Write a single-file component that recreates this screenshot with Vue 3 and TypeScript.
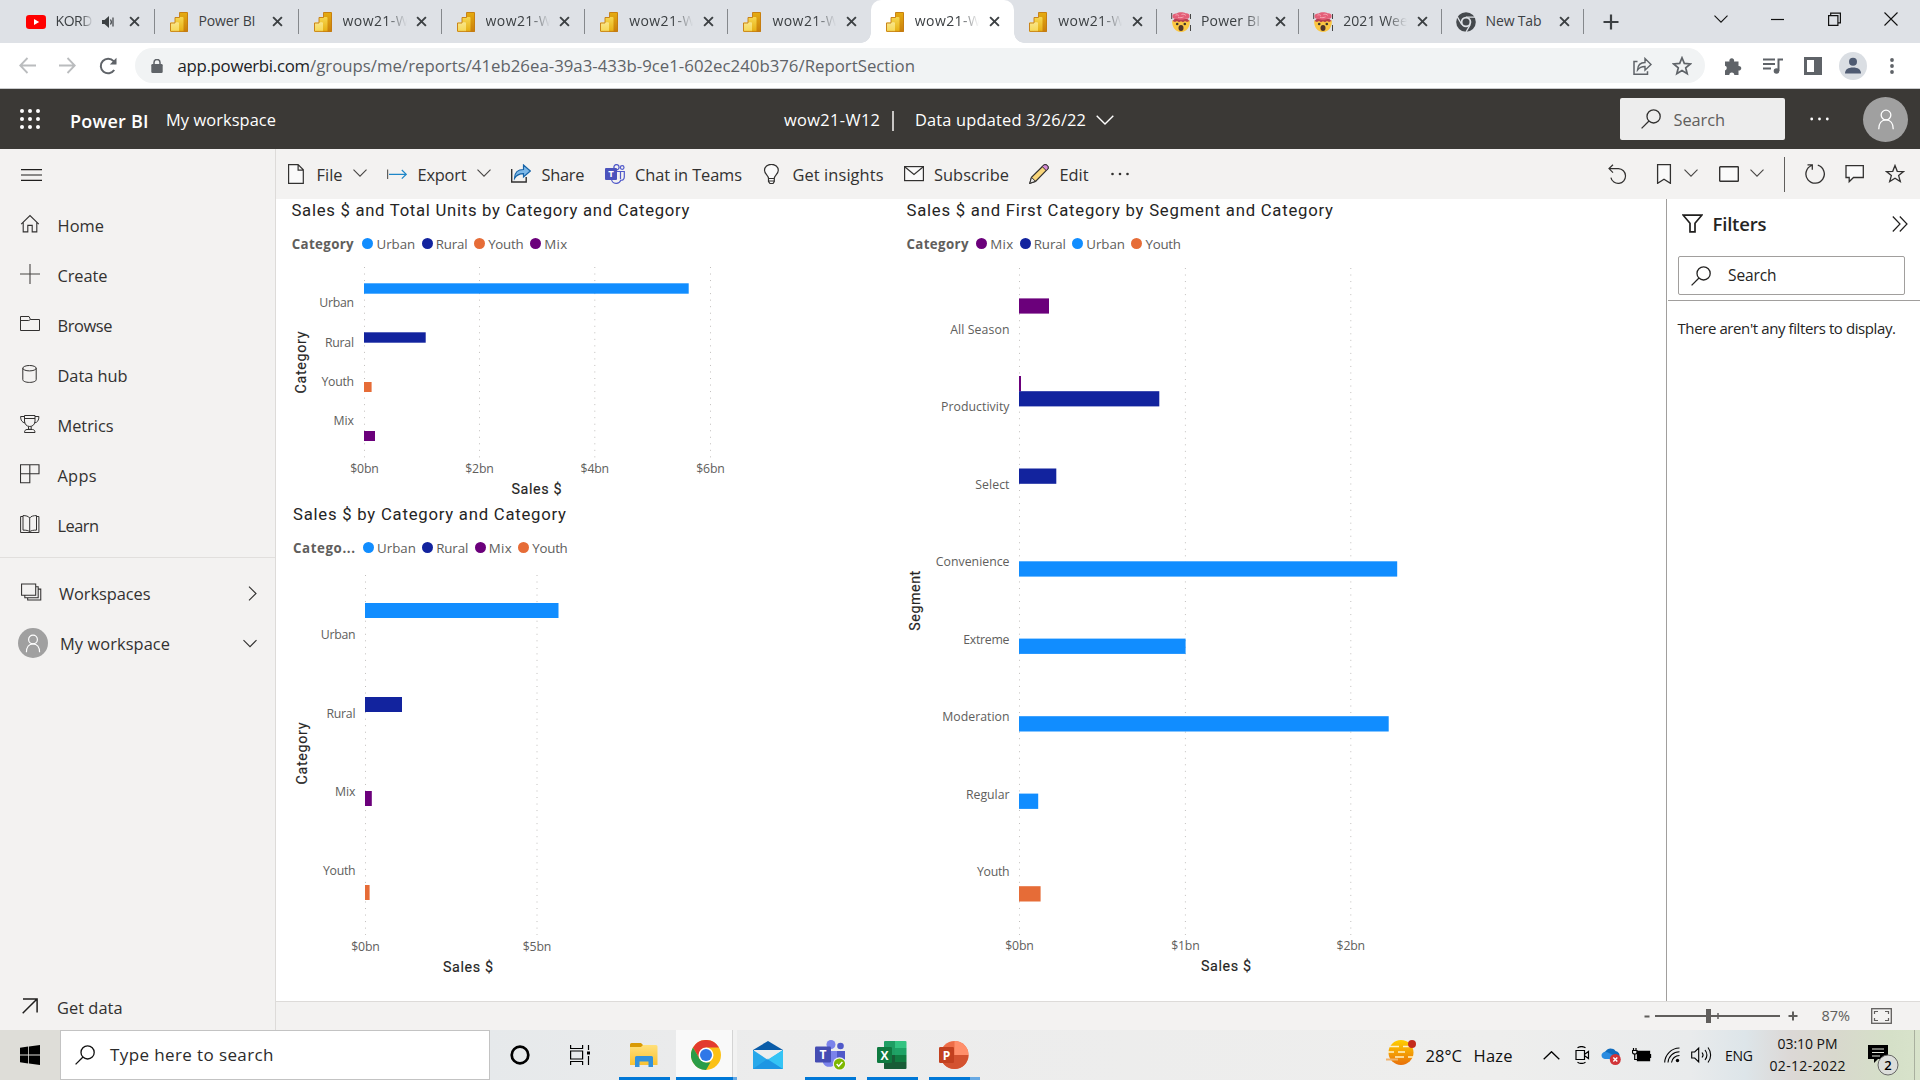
<script setup lang="ts">
import type { Directive } from 'vue'

// Tracks a label out (or in) so that it occupies a fixed width.
const vFit: Directive<HTMLElement, number> = {
  mounted(el, { value }) {
    el.style.display = 'inline-block'
    el.style.whiteSpace = 'nowrap'
    const natural = el.getBoundingClientRect().width
    const gaps = Math.max((el.textContent ?? '').length - 1, 1)
    el.style.letterSpacing = `${(value - natural) / gaps}px`
    el.style.width = `${value}px`
  },
}

interface Tab { icon: string; title: string; fit: number; width: number; active?: boolean; plain?: boolean }
const tabs: Tab[] = [
  { icon: 'youtube', title: 'KORD', fit: 37, width: 143.5 },
  { icon: 'powerbi', title: 'Power BI', fit: 57, width: 144 },
  { icon: 'powerbi', title: 'wow21-W12', fit: 83, width: 143 },
  { icon: 'powerbi', title: 'wow21-W12', fit: 83, width: 143.7 },
  { icon: 'powerbi', title: 'wow21-W12', fit: 83, width: 143.3 },
  { icon: 'powerbi', title: 'wow21-W12', fit: 83, width: 142.3, plain: true },
  { icon: 'powerbi', title: 'wow21-W12', fit: 83, width: 143.5, active: true, plain: true },
  { icon: 'powerbi', title: 'wow21-W12', fit: 83, width: 142.7 },
  { icon: 'mind', title: 'Power BI C', fit: 72, width: 142.3 },
  { icon: 'mind', title: '2021 Week', fit: 72, width: 142.3 },
  { icon: 'chromegray', title: 'New Tab', fit: 56, width: 142.7 },
]

const navItems = [
  { icon: 'home', label: 'Home', fit: 46.5 },
  { icon: 'plus', label: 'Create', fit: 50 },
  { icon: 'folder', label: 'Browse', fit: 55 },
  { icon: 'database', label: 'Data hub', fit: 70 },
  { icon: 'trophy', label: 'Metrics', fit: 56 },
  { icon: 'apps', label: 'Apps', fit: 39 },
  { icon: 'book', label: 'Learn', fit: 41.5 },
]

const commands = [
  { icon: 'file', label: 'File', fit: 26, menu: true },
  { icon: 'export', label: 'Export', fit: 49, menu: true },
  { icon: 'share', label: 'Share', fit: 43 },
  { icon: 'teams', label: 'Chat in Teams', fit: 107 },
  { icon: 'bulb', label: 'Get insights', fit: 91 },
  { icon: 'mail', label: 'Subscribe', fit: 75 },
  { icon: 'pencil', label: 'Edit', fit: 29 },
]

const colors: Record<string, string> = { Urban: '#118dff', Rural: '#12239e', Youth: '#e66c37', Mix: '#6b007b' }
const legendWidths: Record<string, number> = { Urban: 38.7, Rural: 32, Youth: 35.5, Mix: 23 }

interface Label { text: string; y: number; w: number }
interface Bar { y: number; h: number; w: number; key: string }
interface Chart {
  title: string; titleFit: number; legendTitle: string; keys: string[]
  x: number; top: number; width: number; height: number
  origin: number; gridTop: number; gridBottom: number
  labelX: number; labels: Label[]; bars: Bar[]
  ticks: { x: number; text: string }[]; tickY: number
  xTitle: { x: number; y: number }
  yTitle: { text: string; x: number; y: number; w: number }
}

const byCategory: Chart = {
  title: 'Sales $ and Total Units by Category and Category', titleFit: 398, legendTitle: 'Category',
  keys: ['Urban', 'Rural', 'Youth', 'Mix'],
  x: 276, top: 265, width: 614, height: 238,
  origin: 364, gridTop: 267, gridBottom: 458, labelX: 354,
  labels: [
    { text: 'Urban', y: 306.7, w: 34.7 }, { text: 'Rural', y: 346.5, w: 29 },
    { text: 'Youth', y: 385.7, w: 32.5 }, { text: 'Mix', y: 425, w: 20.5 },
  ],
  bars: [
    { y: 283.3, h: 10.4, w: 324.7, key: 'Urban' }, { y: 332.3, h: 10.4, w: 61.7, key: 'Rural' },
    { y: 382, h: 10, w: 7.6, key: 'Youth' }, { y: 431, h: 10, w: 11, key: 'Mix' },
  ],
  ticks: [{ x: 364.5, text: '$0bn' }, { x: 479.5, text: '$2bn' }, { x: 594.8, text: '$4bn' }, { x: 710.5, text: '$6bn' }],
  tickY: 473,
  xTitle: { x: 536.5, y: 494 },
  yTitle: { text: 'Category', x: 305.5, y: 362.5, w: 62 },
}

const salesByCategory: Chart = {
  title: 'Sales $ by Category and Category', titleFit: 273, legendTitle: 'Catego...',
  keys: ['Urban', 'Rural', 'Mix', 'Youth'],
  x: 276, top: 569, width: 614, height: 432,
  origin: 365, gridTop: 575, gridBottom: 935, labelX: 355.5,
  labels: [
    { text: 'Urban', y: 638.7, w: 34.7 }, { text: 'Rural', y: 717.5, w: 29 },
    { text: 'Mix', y: 796, w: 20.5 }, { text: 'Youth', y: 874.7, w: 32.5 },
  ],
  bars: [
    { y: 603, h: 15, w: 193.5, key: 'Urban' }, { y: 697, h: 15, w: 37, key: 'Rural' },
    { y: 791, h: 15, w: 6.8, key: 'Mix' }, { y: 885, h: 15, w: 4.6, key: 'Youth' },
  ],
  ticks: [{ x: 365.5, text: '$0bn' }, { x: 537, text: '$5bn' }],
  tickY: 951,
  xTitle: { x: 468, y: 971.6 },
  yTitle: { text: 'Category', x: 307, y: 753.5, w: 62 },
}

const bySegment: Chart = {
  title: 'Sales $ and First Category by Segment and Category', titleFit: 426.5, legendTitle: 'Category',
  keys: ['Mix', 'Rural', 'Urban', 'Youth'],
  x: 890, top: 265, width: 776, height: 736,
  origin: 1019, gridTop: 268, gridBottom: 935, labelX: 1009.5,
  labels: [
    { text: 'All Season', y: 334, w: 59.3 }, { text: 'Productivity', y: 411.3, w: 68.5 },
    { text: 'Select', y: 488.8, w: 34.2 }, { text: 'Convenience', y: 566, w: 73.7 },
    { text: 'Extreme', y: 644, w: 46.3 }, { text: 'Moderation', y: 721, w: 67.3 },
    { text: 'Regular', y: 799, w: 43.5 }, { text: 'Youth', y: 876.3, w: 32.5 },
  ],
  bars: [
    { y: 298.4, h: 15.2, w: 30, key: 'Mix' }, { y: 376, h: 15.4, w: 2, key: 'Mix' },
    { y: 391.2, h: 15.2, w: 140.3, key: 'Rural' }, { y: 468.5, h: 15.3, w: 37.3, key: 'Rural' },
    { y: 561.3, h: 15.3, w: 378.2, key: 'Urban' }, { y: 638.6, h: 15.3, w: 166.6, key: 'Urban' },
    { y: 716.2, h: 15.3, w: 369.7, key: 'Urban' }, { y: 793.6, h: 15.3, w: 19.2, key: 'Urban' },
    { y: 886.2, h: 15.3, w: 21.6, key: 'Youth' },
  ],
  ticks: [{ x: 1019.5, text: '$0bn' }, { x: 1185.4, text: '$1bn' }, { x: 1350.8, text: '$2bn' }],
  tickY: 950,
  xTitle: { x: 1226, y: 971 },
  yTitle: { text: 'Segment', x: 919.8, y: 600.7, w: 60 },
}

const columns: Chart[][] = [[byCategory, salesByCategory], [bySegment]]
</script>

<template>
  <div class="screen">
    <svg class="sprite" width="0" height="0" aria-hidden="true">
      <defs>
        <linearGradient id="gBack" x1="0" y1="0" x2="0" y2="1"><stop offset="0" stop-color="#e6ad10" /><stop offset="1" stop-color="#c87e0e" /></linearGradient>
        <linearGradient id="gMid" x1="0" y1="0" x2="0" y2="1"><stop offset="0" stop-color="#f6d751" /><stop offset="1" stop-color="#e6ad10" /></linearGradient>
        <linearGradient id="gFront" x1="0" y1="0" x2="0" y2="1"><stop offset="0" stop-color="#f9e589" /><stop offset="1" stop-color="#f6d751" /></linearGradient>
        <linearGradient id="gSun" x1="0" y1="0" x2="0" y2="1"><stop offset="0" stop-color="#ffce00" /><stop offset="1" stop-color="#e8700a" /></linearGradient>
        <linearGradient id="gFolder" x1="0" y1="0" x2="0" y2="1"><stop offset="0" stop-color="#ffe07a" /><stop offset="1" stop-color="#f9c232" /></linearGradient>
      </defs>
      <symbol id="powerbi" viewBox="0 0 18 20">
        <rect x="9.5" y="0" width="8.5" height="20" rx="1" fill="url(#gBack)" />
        <path d="M5 6a1 1 0 0 1 1-1h6.5a1 1 0 0 1 1 1v14H5z" fill="url(#gMid)" />
        <path d="M0 11.3a1 1 0 0 1 1-1h7a1 1 0 0 1 1 1V20H1a1 1 0 0 1-1-1z" fill="url(#gFront)" />
        <path d="M.5 19.4h17V1M.5 19V11h4.5V5.5h4.5V.5h8" fill="none" stroke="#c47b12" stroke-width=".9" />
      </symbol>
      <symbol id="youtube" viewBox="0 0 20 20"><rect y="3" width="20" height="14" rx="3.2" fill="#f00" /><path d="M8 7l5.2 3L8 13z" fill="#fff" /></symbol>
      <symbol id="mind" viewBox="0 0 20 20">
        <path d="M.700 1v6M19.500 2v5M19.500 13v6" stroke="#454545" stroke-width="1" />
        <path d="M1.200 8.500h17.600c.6 6-3 11.500-8.800 11.500S.600 14.500 1.200 8.500z" fill="#fbc742" />
        <path d="M1.500 9l2-2h13l2 2-2.500 1-2-1-2 1.200L10 9.200l-2 1-2-1.200-2 1z" fill="#b5404f" />
        <path d="M1.500 4.500C1 2.500 3.500 1.200 5.500 1.500 7.500-.2 12.500-.2 14.500 1.300c2.500-.4 4.500 1 4 3 .3 2-2 2.800-3.700 2.400-2.300 1.300-6.800 1.300-9.200.2C3.500 7.300 1.200 6.500 1.500 4.500z" fill="#e45f78" />
        <path d="M4.500 3.200c1.500-.8 2.700-.3 3.500.5M10.500 2.600c1.500-.8 3.300-.3 4.300.8M7 5.200c2 .8 4 .5 5.500-.3" fill="none" stroke="#f7a9b6" stroke-width="1" />
        <circle cx="6.200" cy="12" r="1.300" fill="#40352b" /><circle cx="13.800" cy="12" r="1.300" fill="#40352b" />
        <ellipse cx="10" cy="16" rx="2.500" ry="2.900" fill="#51362a" />
      </symbol>
      <symbol id="chromegray" viewBox="0 0 20 20">
        <circle cx="10" cy="10" r="9.800" fill="#45494d" /><circle cx="10" cy="10" r="5.300" fill="#dee1e6" /><circle cx="10" cy="10" r="3.500" fill="#45494d" />
        <path d="M10 5.100h9M5.700 12.500L1.200 4.600M14.300 12.500L10 20" stroke="#dee1e6" stroke-width="1.300" />
      </symbol>
      <symbol id="down" viewBox="0 0 14 8"><path d="M.5.6L7 7.100 13.500.6" fill="none" stroke="currentColor" stroke-width="1.100" /></symbol>
      <symbol id="x" viewBox="0 0 12 12"><path d="M1.200 1.200l9.600 9.600M10.800 1.200L1.200 10.800" stroke="currentColor" stroke-width="2.100" /></symbol>
      <symbol id="magnify" viewBox="0 0 20 20"><circle cx="12.600" cy="7.400" r="6.600" fill="none" stroke="currentColor" stroke-width="1.300" /><path d="M8 12L.6 19.400" stroke="currentColor" stroke-width="1.300" /></symbol>
      <symbol id="person" viewBox="0 0 20 26"><circle cx="10" cy="7.500" r="6" fill="none" stroke="#fff" stroke-width="1.600" /><path d="M1 25c0-7 3.500-11.500 9-11.500s9 4.500 9 11.500" fill="none" stroke="#fff" stroke-width="1.600" /></symbol>
      <symbol id="starline" viewBox="0 0 20 20"><path d="M10 1.500l2.250 5.800 6.250.3-4.850 3.950 1.650 6.050L10 14.200l-5.300 3.400 1.650-6.050L1.500 7.600l6.250-.3z" fill="none" stroke="currentColor" stroke-width="1.300" /></symbol>

      <symbol id="home" viewBox="0 0 20 20"><path d="M1.200 10.200L10 1.600l8.800 8.600M3.200 8.500v9.400h4.600v-6.500h4.400v6.500h4.600V8.500" fill="none" stroke="#323130" stroke-width="1.100" /></symbol>
      <symbol id="plus" viewBox="0 0 20 20"><path d="M10 0v20M0 10h20" stroke="#484644" stroke-width="1.100" /></symbol>
      <symbol id="folder" viewBox="0 0 20 20"><path d="M.5 16.500v-14h8.500l1.500 3h9v11zM.5 6.500h8.200l1.800-1" fill="none" stroke="#323130" /></symbol>
      <symbol id="database" viewBox="0 0 20 20"><ellipse cx="9.500" cy="4.200" rx="6.700" ry="2.700" fill="none" stroke="#323130" /><path d="M2.800 4.200v11.500c0 1.500 3 2.700 6.700 2.700s6.700-1.200 6.700-2.700V4.200" fill="none" stroke="#323130" /></symbol>
      <symbol id="trophy" viewBox="0 0 20 20"><path d="M4.500 1.500h10.500v5.500c0 3-2 5.500-5.200 5.500S4.500 10 4.500 7zM4.500 4.500H15M4.500 2.500H.6c0 3.500 1.200 6 4.600 6.500M15 2.500h3.900c0 3.500-1.200 6-4.600 6.500M8.500 12.500v2.800h2.700v-2.800M4.500 18.500c0-2 1-3 2.500-3h5.500c1.500 0 2.500 1 2.500 3z" fill="none" stroke="#323130" /></symbol>
      <symbol id="apps" viewBox="0 0 20 20"><path d="M.5.800h18.500v9H.5zM.5 9.800v9h9.300v-18" fill="none" stroke="#323130" stroke-width="1.100" /></symbol>
      <symbol id="book" viewBox="0 0 20 20"><path d="M3 2.500H.600v16H18.900v-16H16.500M9.700 4C8.700 2.200 5.500 1.500 3 1.600v14.500c3 0 5.700.3 6.700 1.900 1-1.600 3.800-1.900 6.800-1.900V1.600C14 1.500 10.700 2.200 9.700 4zM9.700 4v14" fill="none" stroke="#323130" /></symbol>
      <symbol id="stack" viewBox="0 0 22 18"><path d="M.6.600h14.800v11.800H.600zM15.400 3.500h2.600v11.500H4v-2.600M18 6h2.700v11.400H7v-2.400" fill="none" stroke="#323130" stroke-width="1.100" /></symbol>

      <symbol id="file" viewBox="0 0 20 20"><path d="M2.600.600h9.500L17.300 5.800v13.600H2.600zM12.100.600v5.500h5.200" fill="#fafafa" stroke="#323130" stroke-width="1.200" /></symbol>
      <symbol id="export" viewBox="0 0 20 20"><path d="M.600 5.500v9.500" stroke="#605e5c" stroke-width="1.200" /><path d="M2 10.300h17.300M14.800 6l4.500 4.300-4.500 4.300" fill="none" stroke="#1e86c8" stroke-width="1.200" /></symbol>
      <symbol id="share" viewBox="0 0 20 20"><path d="M.700 5v13h14.500v-5" fill="none" stroke="#323130" stroke-width="1.400" /><path d="M3.500 14.500c0-6 3.500-9 9-9V1l6.800 6-6.800 6V9.700c-4 0-7 1.300-9 4.800z" fill="#7db8e8" stroke="#1664a8" stroke-width="1.200" /></symbol>
      <symbol id="teams" viewBox="0 0 20 20"><circle cx="11.500" cy="3.200" r="2.600" fill="#f3f2f1" stroke="#5059c9" stroke-width="1.300" /><circle cx="17.200" cy="3.500" r="1.800" fill="#f3f2f1" stroke="#5059c9" stroke-width="1.200" /><path d="M8 7.500h11.300V13c0 2.500-2 3.500-3.500 3.200C15 18 13 19.500 11 19.300c-3 0-4.500-2.500-4.500-4.500zM15.500 7.500V15" fill="#f3f2f1" stroke="#5059c9" stroke-width="1.200" /><rect y="4" width="12" height="12" rx="1" fill="#4b53bc" /><text x="6" y="13.400" text-anchor="middle" font-family="Open Sans" font-size="9.500" font-weight="700" fill="#fff">T</text></symbol>
      <symbol id="bulb" viewBox="0 0 20 20"><path d="M6.500 14.500c0-3-4-4.300-4-8.200a6.900 6 0 0 1 13.800 0c0 3.900-4 5.200-4 8.200zM6.500 14.500v3l1.500 2h3l1.300-2v-3M6.500 17h5.800" fill="#fafafa" stroke="#323130" stroke-width="1.200" /></symbol>
      <symbol id="mail" viewBox="0 0 20 20"><rect x=".6" y="2.600" width="18.800" height="14" fill="#fafafa" stroke="#323130" stroke-width="1.200" /><path d="M1 3l9 7.500L19 3" fill="none" stroke="#323130" stroke-width="1.200" /></symbol>
      <symbol id="pencil" viewBox="0 0 20 20"><path d="M.800 19.300l1.700-6L14.700 1.200c1-.8 2.600-.6 3.600.4s1.200 2.600.3 3.500L6.500 17.400z" fill="#f9d67a" stroke="#323130" stroke-width="1.200" /><path d="M13.300 2.600l1.400-1.400c1-.8 2.600-.6 3.600.4s1.200 2.600.3 3.500l-1.400 1.500z" fill="#d58bd8" stroke="#323130" /><path d="M.800 19.300l1.700-6 4 4z" fill="#e8e6e4" stroke="#323130" /></symbol>
      <symbol id="undo" viewBox="0 0 20 20"><path d="M5 .700L1 4.600l4 4M1 4.600h9.500a7.400 7.400 0 1 1-7.600 9" fill="none" stroke="#323130" stroke-width="1.200" /></symbol>
      <symbol id="bookmark" viewBox="0 0 20 20"><path d="M3.600.700h12.800v18.600L10 15.200l-6.400 4.100z" fill="#fafafa" stroke="#323130" stroke-width="1.300" /></symbol>
      <symbol id="view" viewBox="0 0 20 20"><rect x=".7" y="2.700" width="18.600" height="14.600" rx=".6" fill="#fafafa" stroke="#323130" stroke-width="1.400" /></symbol>
      <symbol id="refresh" viewBox="0 0 20 20"><path d="M12.800 1.200a9.200 9.200 0 1 1-6.200.3M2.500.800l4.800 0v5" fill="none" stroke="#323130" stroke-width="1.300" /></symbol>
      <symbol id="comment" viewBox="0 0 20 20"><path d="M1 1.700h17.300v11.800H8.500l-4.300 4.300v-4.300H1z" fill="#fafafa" stroke="#323130" stroke-width="1.300" /></symbol>
    </svg>

    <header class="tabstrip">
      <div v-for="(tab, i) in tabs" :key="i" class="tab" :class="{ active: tab.active, plain: tab.plain, first: i === 0 }" :style="{ width: tab.width + 'px' }">
        <svg class="favicon" :class="{ wide: !tab.icon.startsWith('power') }"><use :href="'#' + tab.icon" /></svg>
        <span class="tab-title" :class="{ fade: tab.fit > 60 || i === 0 }"><span v-fit="tab.fit">{{ tab.title }}</span></span>
        <svg v-if="i === 0" class="speaker" viewBox="0 0 13 12"><path d="M0 4h2.500L7 0v12L2.500 8H0z" fill="#3c4043" /><path d="M8.500 3.500c1 1.500 1 3.500 0 5M11 1.500v9" fill="none" stroke="#3c4043" stroke-width="1.200" /></svg>
        <svg class="tab-close"><use href="#x" /></svg>
      </div>
      <svg class="new-tab" viewBox="0 0 16 16"><path d="M8 .5v15M.5 8h15" stroke="#3c4043" stroke-width="2.200" /></svg>
      <div class="window-controls">
        <svg width="14" height="8"><use href="#down" /></svg>
        <svg width="13" height="14" viewBox="0 0 13 14"><path d="M0 7.500h13" stroke="#111" stroke-width="1.200" /></svg>
        <svg width="13" height="14" viewBox="0 0 13 14"><path d="M.6 3.600h9.300v9.800H.600zM2.700 3.500V1.100h9.700v9.800H10" fill="none" stroke="#111" stroke-width="1.200" /></svg>
        <svg width="14" height="14" viewBox="0 0 14 14"><path d="M.5.500l13 13M13.500.500l-13 13" stroke="#111" stroke-width="1.100" /></svg>
      </div>
    </header>

    <div class="navbar">
      <svg class="back" viewBox="0 0 17 17"><path d="M17 8.500H1.500M8.500 1L1.200 8.500l7.300 7.500" fill="none" stroke="#babcbe" stroke-width="1.800" /></svg>
      <svg class="forward" viewBox="0 0 17 17"><path d="M0 8.500h15.500M8.500 1l7.300 7.500L8.500 16" fill="none" stroke="#babcbe" stroke-width="1.800" /></svg>
      <svg class="reload" viewBox="0 0 18 18"><path d="M15.200 13A7.300 7.300 0 1 1 14.600 4.200L16.500 6.500" fill="none" stroke="#5f6368" stroke-width="2" /><path d="M17.500.800V7.500h-6.700z" fill="#5f6368" /></svg>
      <div class="omnibox">
        <svg class="lock" viewBox="0 0 12 14"><rect x=".3" y="5" width="11.400" height="9" rx="1.200" fill="#5f6368" /><path d="M3 6V3.500a3 3 0 0 1 6 0V6" fill="none" stroke="#5f6368" stroke-width="1.500" /></svg>
        <span v-fit="132.500" class="host">app.powerbi.com</span><span v-fit="605" class="path">/groups/me/reports/41eb26ea-39a3-433b-9ce1-602ec240b376/ReportSection</span>
        <svg class="omni-share" viewBox="0 0 19 18"><path d="M4.500 4.500H1v12.700h13.500v-3" fill="none" stroke="#5f6368" stroke-width="1.500" /><path d="M4.500 13c.3-5 3-7.500 7.500-7.500v-4l6 6-6 5.700V9.500c-3.500 0-5.700 1-7.500 3.500z" fill="none" stroke="#5f6368" stroke-width="1.400" /></svg>
        <svg class="omni-star" viewBox="0 0 20 20"><path d="M10 1.800l2.300 5.600 6.100.5-4.700 3.900 1.500 5.900L10 14.500l-5.200 3.200 1.500-5.900L1.600 7.900l6.100-.5z" fill="none" stroke="#5f6368" stroke-width="1.700" /></svg>
      </div>
      <svg class="puzzle" viewBox="0 0 18 18"><path d="M1 4.500h4.500a2.400 2.400 0 1 1 4.500 0h4.500V9a2.300 2.300 0 1 1 0 4.500V18h-4.200a2.500 2.500 0 0 0-5 0H1v-4.500a2.500 2.500 0 0 0 0-4.800z" fill="#5f6368" /></svg>
      <svg class="playlist" viewBox="0 0 20 16"><path d="M0 1.500h12M0 6h12M0 10.500h8M15.500 13V1.500H20" fill="none" stroke="#5f6368" stroke-width="2" /><circle cx="13.500" cy="13" r="2.800" fill="#5f6368" /></svg>
      <svg class="panel" viewBox="0 0 18 18"><path d="M0 0h18v18H0zM3 3v12h7V3z" fill="#5f6368" fill-rule="evenodd" /></svg>
      <svg class="profile" viewBox="0 0 28 28"><circle cx="14" cy="14" r="14" fill="#dadee3" /><circle cx="14" cy="9.800" r="4" fill="#4f5b72" /><path d="M6 21.500c0-4 3-6 8-6s8 2 8 6z" fill="#4f5b72" /></svg>
      <svg class="kebab" viewBox="0 0 4 18"><circle cx="2" cy="3" r="1.900" fill="#5f6368" /><circle cx="2" cy="9" r="1.900" fill="#5f6368" /><circle cx="2" cy="15" r="1.900" fill="#5f6368" /></svg>
    </div>

    <div class="brandbar">
      <svg class="waffle" viewBox="0 0 20 20" fill="#fff"><template v-for="r in 3" :key="r"><circle v-for="c in 3" :key="c" :cx="c * 8 - 6" :cy="r * 8 - 6" r="2" /></template></svg>
      <b v-fit="78.500" class="brand">Power BI</b>
      <span v-fit="110" class="crumb">My workspace</span>
      <span v-fit="96" class="report-name">wow21-W12</span>
      <i class="brand-divider"></i>
      <span v-fit="171">Data updated 3/26/22</span>
      <svg class="brand-chevron" viewBox="0 0 18 10"><path d="M.7.700L9 9 17.300.7" fill="none" stroke="#fff" stroke-width="1.400" /></svg>
      <div class="brand-search"><svg width="20" height="20"><use href="#magnify" /></svg><span v-fit="51.500">Search</span></div>
      <svg class="brand-dots" viewBox="0 0 19 4" fill="#fff"><circle cx="1.700" cy="2" r="1.400" /><circle cx="9.500" cy="2" r="1.400" /><circle cx="17.300" cy="2" r="1.400" /></svg>
      <div class="brand-avatar"><svg width="18" height="21"><use href="#person" /></svg></div>
    </div>

    <div class="workarea">
      <nav class="sidebar">
        <svg class="hamburger" viewBox="0 0 21 12"><path d="M0 .700h21M0 6h21M0 11.300h21" stroke="#201f1e" stroke-width="1.200" /></svg>
        <div v-for="item in navItems" :key="item.label" class="nav-item">
          <svg width="20" height="20"><use :href="'#' + item.icon" /></svg>
          <span v-fit="item.fit">{{ item.label }}</span>
        </div>
        <hr />
        <div class="nav-item workspaces">
          <svg width="21" height="18"><use href="#stack" /></svg>
          <span v-fit="91.500">Workspaces</span>
          <svg class="arrow" width="9" height="15" viewBox="0 0 9 15"><path d="M1 .700l7 6.800-7 6.800" fill="none" stroke="#323130" stroke-width="1.100" /></svg>
        </div>
        <div class="nav-item mine">
          <div class="small-avatar"><svg width="16" height="19"><use href="#person" /></svg></div>
          <span v-fit="110">My workspace</span>
          <svg class="arrow" width="14" height="9"><use href="#down" /></svg>
        </div>
        <div class="nav-item get-data">
          <svg width="16" height="16" viewBox="0 0 16 16"><path d="M.7 15.300L15 1M1 .900h14.100v13.500" fill="none" stroke="#201f1e" stroke-width="1.500" /></svg>
          <span v-fit="65.500">Get data</span>
        </div>
      </nav>

      <main class="content">
        <div class="commandbar">
          <div v-for="cmd in commands" :key="cmd.label" class="command">
            <svg width="20" height="20"><use :href="'#' + cmd.icon" /></svg>
            <span v-fit="cmd.fit">{{ cmd.label }}</span>
            <svg v-if="cmd.menu" class="menu-arrow" width="14" height="8"><use href="#down" /></svg>
          </div>
          <svg class="more" width="18" height="4" viewBox="0 0 18 4" fill="#323130"><circle cx="1.500" cy="2" r="1.300" /><circle cx="9" cy="2" r="1.300" /><circle cx="16.500" cy="2" r="1.300" /></svg>
          <div class="tools">
            <svg class="tool"><use href="#undo" /></svg>
            <svg class="tool t-bookmark"><use href="#bookmark" /></svg>
            <svg class="menu-arrow" width="14" height="8"><use href="#down" /></svg>
            <svg class="tool t-view"><use href="#view" /></svg>
            <svg class="menu-arrow" width="14" height="8"><use href="#down" /></svg>
            <i class="tool-divider"></i>
            <svg class="tool"><use href="#refresh" /></svg>
            <svg class="tool t-comment"><use href="#comment" /></svg>
            <svg class="tool t-star"><use href="#starline" /></svg>
          </div>
        </div>

        <div class="report">
          <div v-for="(column, c) in columns" :key="c" class="column">
            <section v-for="chart in column" :key="chart.title" class="chart">
              <h2><span v-fit="chart.titleFit">{{ chart.title }}</span></h2>
              <div class="legend">
                <b v-fit="62">{{ chart.legendTitle }}</b>
                <span v-for="key in chart.keys" :key="key" class="legend-item">
                  <i :style="{ background: colors[key] }"></i><span v-fit="legendWidths[key]">{{ key }}</span>
                </span>
              </div>
              <svg class="plot" :width="chart.width" :height="chart.height" :viewBox="`${chart.x} ${chart.top} ${chart.width} ${chart.height}`">
                <line v-for="tick in chart.ticks" :key="tick.text" :x1="tick.x" :x2="tick.x" :y1="chart.gridTop" :y2="chart.gridBottom" class="grid" />
                <rect v-for="(bar, b) in chart.bars" :key="b" :x="chart.origin" :y="bar.y" :width="bar.w" :height="bar.h" :fill="colors[bar.key]" />
                <text v-for="label in chart.labels" :key="label.text" class="axis" :x="chart.labelX - label.w" :y="label.y" :textLength="label.w">{{ label.text }}</text>
                <text v-for="tick in chart.ticks" :key="tick.x" class="axis" :x="tick.x - 14.2" :y="chart.tickY" textLength="28.500">{{ tick.text }}</text>
                <text class="axis-title" :x="chart.xTitle.x - 25" :y="chart.xTitle.y" textLength="50">Sales $</text>
                <text class="axis-title" :x="-chart.yTitle.w / 2" y="0" :textLength="chart.yTitle.w" :transform="`translate(${chart.yTitle.x} ${chart.yTitle.y}) rotate(-90)`">{{ chart.yTitle.text }}</text>
              </svg>
            </section>
          </div>

          <aside class="filters">
            <div class="filters-head">
              <svg width="21" height="19" viewBox="0 0 21 19"><path d="M1.200 1.200h18.600L13 9.200v8.600H8V9.200z" fill="none" stroke="#201f1e" stroke-width="1.700" /></svg>
              <b v-fit="54">Filters</b>
              <svg class="collapse" width="16" height="16" viewBox="0 0 16 16"><path d="M.8.500L8 8 .800 15.500M7.800.500L15 8l-7.200 7.500" fill="none" stroke="#201f1e" stroke-width="1.200" /></svg>
            </div>
            <div class="filters-search"><svg width="20" height="20"><use href="#magnify" /></svg><span v-fit="48.500">Search</span></div>
            <p><span v-fit="218.500">There aren't any filters to display.</span></p>
          </aside>
        </div>

        <footer class="statusbar">
          <svg class="zoomer" width="154" height="16" viewBox="0 0 154 16"><path d="M.5 8.500h5M11 8h125M144.500 8h9M149 3.500v9" stroke="#605e5c" stroke-width="2" /><rect x="62" y="1" width="5" height="14" fill="#605e5c" /><path d="M74 5v6" stroke="#605e5c" stroke-width="1.500" /></svg>
          <span v-fit="28.500">87%</span>
          <svg width="21" height="16" viewBox="0 0 21 16"><rect x=".7" y=".7" width="19.600" height="14.600" fill="none" stroke="#605e5c" stroke-width="1.300" /><path d="M3.500 6V3.500H7M14 3.500h3.500V6M3.500 10v2.500H7M14 12.500h3.500V10" fill="none" stroke="#605e5c" stroke-width="1.200" /></svg>
        </footer>
      </main>
    </div>

    <div class="taskbar">
      <div class="start"><svg width="20" height="20" viewBox="0 0 20 20"><path d="M0 2.800L8.200 1.600v7.900H0zM9 1.500L20 0v9.500H9zM0 10.400h8.200v8L0 17.200zM9 10.400h11V20L9 18.500z" /></svg></div>
      <div class="task-search"><svg width="20" height="20"><use href="#magnify" /></svg><span v-fit="163.500">Type here to search</span></div>
      <div class="slot cortana"><svg width="20" height="20" viewBox="0 0 20 20"><circle cx="10" cy="10" r="8.300" fill="none" stroke="#000" stroke-width="2.700" /></svg></div>
      <div class="slot view"><svg width="21" height="20" viewBox="0 0 21 20"><path d="M.6 0v3.500h12V0M.6 20v-3.500h12V20M.6 6h12v8h-12zM18.500 0v5M18.500 11v9" fill="none" stroke="#000" stroke-width="1.200" /><rect x="17" y="6.500" width="3" height="3" /></svg></div>
      <div class="slot app explorer"><svg width="28" height="24" viewBox="0 0 28 24"><path d="M0 1.500A1.500 1.500 0 0 1 1.500 0H11l2.500 2.500-2 2.500H0z" fill="#d99a05" /><path d="M0 4h11l2-2h13a1.500 1.500 0 0 1 1.500 1.500V22H0z" fill="url(#gFolder)" /><path d="M5 24V14.500A1.500 1.500 0 0 1 6.500 13h15a1.500 1.500 0 0 1 1.500 1.500V24h-4.500v-5.500h-9V24z" fill="#3191dc" /></svg></div>
      <div class="slot app chrome"><svg width="30" height="30" viewBox="0 0 30 30"><circle cx="15" cy="15" r="15" fill="#fbc116" /><path d="M15 15h0L8.500 18.800 2 7.500A15 15 0 0 1 28 7.500H15z" fill="#e33b2e" /><path d="M2 7.500L8.500 18.800 15 22.500h4.400L15 30A15 15 0 0 1 2 7.500z" fill="#2b9c48" /><circle cx="15" cy="15" r="7.500" fill="#fff" /><circle cx="15" cy="15" r="6" fill="#2f78e8" /></svg></div>
      <div class="slot mail-slot"><svg width="30" height="28" viewBox="0 0 30 28"><path d="M0 9L15 0l15 9v5H0z" fill="#0a5ca8" /><path d="M1 9h28v9H1z" fill="#ededed" /><path d="M0 9l15 10 15-10v19H0z" fill="#28a8ea" /><path d="M0 28h30L15 17.500z" fill="#1587dc" opacity=".55" /><path d="M30 9v19L15 18.500z" fill="#35c4f5" /></svg></div>
      <div class="slot app teams-slot"><svg width="32" height="31" viewBox="0 0 32 31"><circle cx="16" cy="4.500" r="4.500" fill="#7b83eb" /><circle cx="25.500" cy="6" r="3.300" fill="#5059c9" /><path d="M20 11h10v8c0 4-3 6-6 6h-4z" fill="#5059c9" /><path d="M8 11h14v9a7.500 7.500 0 0 1-14 3z" fill="#7b83eb" /><rect y="6.500" width="16" height="16" rx="1.300" fill="#454db3" /><text x="8" y="19" text-anchor="middle" font-family="Open Sans" font-size="12" font-weight="700" fill="#fff">T</text><circle cx="24.500" cy="24" r="6.700" fill="#f2f2f2" /><circle cx="24.500" cy="24" r="5.600" fill="#7db700" /><path d="M21.700 24l2 2.200 3.700-4.200" fill="none" stroke="#fff" stroke-width="1.500" /></svg></div>
      <div class="slot app excel"><svg width="30" height="28" viewBox="0 0 30 28"><path d="M7 1a1 1 0 0 1 1-1h10v28H8a1 1 0 0 1-1-1z" fill="#1f9e63" /><path d="M18 0h10.500a1 1 0 0 1 1 1v6H18z" fill="#33c481" /><path d="M18 7h11.500v7H18z" fill="#1fa366" /><path d="M18 14h11.500v7H18z" fill="#107c41" /><path d="M7 21h22.500v6a1 1 0 0 1-1 1H8a1 1 0 0 1-1-1zM7 14h11v7H7z" fill="#185c37" /><rect y="6" width="15" height="16" rx="1.300" fill="#0f7a40" /><text x="7.500" y="18.600" text-anchor="middle" font-family="Open Sans" font-size="12" font-weight="700" fill="#fff">X</text></svg></div>
      <div class="slot app ppt"><svg width="30" height="28" viewBox="0 0 30 28"><circle cx="15.500" cy="14" r="14" fill="#ed6c47" /><path d="M15.500 0a14 14 0 0 1 14 14h-14z" fill="#ff8f6b" /><path d="M1.500 14h28a14 14 0 0 1-28 0z" fill="#d35230" /><rect y="6" width="15" height="16" rx="1.300" fill="#c2401f" /><text x="7.500" y="18.600" text-anchor="middle" font-family="Open Sans" font-size="12" font-weight="700" fill="#fff">P</text></svg></div>
      <div class="tray">
        <svg class="sun" width="30" height="26" viewBox="0 0 30 26"><circle cx="15" cy="12.500" r="12.500" fill="url(#gSun)" /><path d="M4 6.500h9M17 6.500h7M2 12h6M12 12h7M9 17h9M22 17h6" stroke="#fff3c8" stroke-width="1.300" /><path d="M0 19.500h12" stroke="#f0b26a" stroke-width="2" /><circle cx="26" cy="4" r="4" fill="#c42b1c" /></svg>
        <span v-fit="36.500" class="temp">28°C</span><span v-fit="39" class="haze">Haze</span>
        <svg class="chev-up" width="17" height="9" viewBox="0 0 17 9"><path d="M.7 8.300L8.500.700l7.800 7.600" fill="none" stroke="#000" stroke-width="1.300" /></svg>
        <svg class="cam" width="15" height="18" viewBox="0 0 15 18"><path d="M1 4.500h8.500v9H1zM10 8l3.500-2.500v7L10 10M2.500 1.800c2.500-1.600 5.500-1.600 8 0M2.500 16.200c2.500 1.600 5.500 1.600 8 0" fill="none" stroke="#000" stroke-width="1.200" /></svg>
        <svg class="cloud" width="20" height="17" viewBox="0 0 20 17"><path d="M4 10.500a4 4 0 0 1 .5-7.300A6 6 0 0 1 14.500 3 4.500 4.500 0 0 1 18 9.500L14 11z" fill="#0f6cbd" /><path d="M8 5l9.500 4.500L14 11H4a4 4 0 0 1-3.500-4C1 4 5 3 8 5z" fill="#2a8be0" /><circle cx="14.300" cy="11.500" r="5.500" fill="#d13438" /><path d="M12.300 9.500l4 4M16.300 9.500l-4 4" stroke="#fff" stroke-width="1.400" /></svg>
        <svg class="battery" width="20" height="14" viewBox="0 0 20 14"><path d="M5.500 3.500h12v9h-12zM18.500 6v4" fill="none" stroke="#000" stroke-width="1.300" /><rect x="6" y="4" width="11" height="8" /><path d="M1.500 0v2.500M4 0v2.500M.5 2.500H5v2c0 2-4.500 2-4.500 0zM2.700 6v5.500H5" fill="none" stroke="#000" stroke-width="1.200" /></svg>
        <svg class="wifi" width="16" height="16" viewBox="0 0 16 16"><path d="M.7 15.500A15 15 0 0 1 15.500 1M4 15.500A11.500 11.500 0 0 1 15.500 4.700M7.500 15.500a8 8 0 0 1 8-7" fill="none" stroke="#000" stroke-width="1.100" /><circle cx="13.500" cy="13.500" r="1.700" /></svg>
        <svg class="volume" width="21" height="18" viewBox="0 0 21 18"><path d="M.7 6h3l4-4v14l-4-4h-3zM11 6.500c1.300 1.500 1.300 3.500 0 5M14 4c2.300 3 2.300 7 0 10M17 1.500c3.500 4.500 3.500 10.500 0 15" fill="none" stroke="#000" stroke-width="1.100" /></svg>
        <span v-fit="28" class="lang">ENG</span>
        <div class="clock"><span v-fit="60">03:10 PM</span><span v-fit="76">02-12-2022</span></div>
        <svg class="notice" width="31" height="31" viewBox="0 0 31 31"><path d="M0 0h20v14H10l-4 4v-4H0z" /><path d="M4 4h12M4 7.500h12M4 11h8" stroke="#e4e8dd" stroke-width="1.200" /><circle cx="20" cy="20" r="10" fill="#dcdedb" stroke="#666" /><text x="20" y="24.800" text-anchor="middle" font-family="Open Sans" font-size="13" font-weight="600">2</text></svg>
        <i class="peek"></i>
      </div>
    </div>
  </div>
</template>

<style>
body { margin: 0; overflow: hidden; }
</style>

<style scoped>
.screen { width: 1920px; height: 1080px; display: flex; flex-direction: column; font-family: "Open Sans", "Noto Sans", sans-serif; font-size: 16.4px; color: #323130; background: #fff; overflow: hidden; position: relative; }
.screen * { box-sizing: border-box; }
svg { flex: none; display: block; }
svg.sprite { position: absolute; }
span, b { flex: none; }

.tabstrip { height: 43px; flex: none; background: #dee1e6; display: flex; align-items: center; padding-left: 11px; color: #3c4043; font-size: 14px; }
.tab { height: 43px; flex: none; display: flex; align-items: center; padding-left: 15px; position: relative; }
.tab:not(.plain)::after { content: ""; position: absolute; right: 0; top: 9px; width: 1px; height: 25px; background: #85888c; }
.favicon { width: 18px; height: 20px; }
.favicon.wide { width: 20px; margin: 0 -1px; }
.first .favicon.wide { margin: 0; }
.tab-title { width: 64px; margin-left: 11px; overflow: hidden; line-height: 24px; white-space: nowrap; padding-bottom: 1px; }
.tab-title.fade { mask-image: linear-gradient(90deg, #000 68%, transparent 100%); }
.first .tab-title { width: 37px; margin-left: 9.500px; }
.speaker { width: 13px; height: 12px; margin-left: 9px; }
.tab-close { width: 11px; height: 11px; margin-left: 9.800px; }
.first .tab-close { margin-left: 14.800px; }
.active { background: #fff; border-radius: 10px 10px 0 0; }
.active::before { content: ""; position: absolute; left: -10px; right: -10px; bottom: 0; height: 10px; background: radial-gradient(circle at 0 0, transparent 9.500px, #fff 10px) left / 10px 10px no-repeat, radial-gradient(circle at 100% 0, transparent 9.500px, #fff 10px) right / 10px 10px no-repeat; }
.new-tab { width: 16px; height: 16px; margin-left: 19px; }
.window-controls { margin-left: auto; display: flex; align-items: center; gap: 43.500px; padding: 0 22px 6px 0; color: #111; }

.navbar { height: 46px; flex: none; border-bottom: 1px solid #c9cacc; display: flex; align-items: center; }
.back, .forward { width: 17px; height: 17px; margin: 0 0 1px 19px; }
.forward { margin-left: 23px; }
.reload { width: 18px; height: 18px; margin-left: 22.500px; }
.omnibox { width: 1570px; height: 35px; margin-left: 18.500px; border-radius: 18px; background: #f1f3f4; display: flex; align-items: center; font-size: 16.800px; }
.lock { width: 12px; height: 14px; margin: 0 14.500px 0 16px; }
.host { color: #202124; }
.path { color: #5f6368; }
.omni-share { width: 19px; height: 18px; margin-left: auto; }
.omni-star { width: 20px; height: 20px; margin: 0 13px 0 20px; }
.puzzle { width: 18px; height: 18px; margin-left: 19px; }
.playlist { width: 20px; height: 16px; margin-left: 21px; }
.panel { width: 18px; height: 18px; margin-left: 21px; }
.profile { width: 28px; height: 28px; margin-left: 17px; }
.kebab { width: 4px; height: 18px; margin-left: 23px; }

.brandbar { height: 60px; flex: none; background: #3b3936; color: #fff; display: flex; align-items: center; padding: 0 12px 0 19.500px; font-size: 16.400px; }
.waffle { width: 20px; height: 20px; }
.brand { margin: 3px 0 0 30.500px; font-size: 18px; font-weight: 600; }
.crumb { margin-left: 17.500px; }
.report-name { margin-left: 508px; }
.brand-divider { width: 2px; height: 20px; margin: 4px 21px 0 12px; background: #c8c6c4; }
.brand-chevron { width: 18px; height: 10px; margin: 2px 0 0 10px; }
.brand-search { width: 165px; height: 42px; margin-left: auto; border-radius: 2px; background: #ededed; display: flex; align-items: center; padding-left: 21px; gap: 12.500px; color: #605e5c; }
.brand-search svg { color: #323130; }
.brand-dots { width: 19px; height: 4px; margin: 0 34px 0 25px; }
.brand-avatar { width: 45px; height: 45px; border-radius: 50%; background: #a0a0a0; display: flex; align-items: center; justify-content: center; }

.workarea { height: 881px; flex: none; display: flex; }
.sidebar { width: 276px; flex: none; background: #f3f2f1; border-right: 1px solid #dddbd9; display: flex; flex-direction: column; }
.hamburger { width: 21px; height: 12px; margin: 19.500px 0 19.500px 21px; }
.nav-item { height: 50px; flex: none; display: flex; align-items: center; padding-left: 20px; gap: 17.500px; }
.nav-item > svg:first-child { margin-bottom: 3px; }
hr { width: 100%; height: 1px; border: 0; margin: 7px 0 10px; background: #e1dfdd; flex: none; }
.workspaces { padding-left: 21px; gap: 17px; }
.arrow { margin-left: auto; margin-right: 18px; }
.mine { padding-left: 18px; gap: 12px; }
.small-avatar { width: 30px; height: 30px; border-radius: 50%; background: #a0a0a0; display: flex; align-items: center; justify-content: center; }
.get-data { margin-top: auto; margin-bottom: -2px; padding-left: 22px; gap: 19px; }

.content { flex: 1; display: flex; flex-direction: column; min-width: 0; }
.commandbar { height: 50px; flex: none; background: #f3f2f1; display: flex; align-items: center; padding-left: 10px; gap: 20px; }
.command { display: flex; align-items: center; gap: 10.500px; }
.menu-arrow { color: #484644; margin-bottom: 2px; }
.more { margin-left: 2px; }
.tools { margin-left: auto; display: flex; align-items: center; padding-right: 15px; }
.tool { width: 20px; height: 20px; color: #323130; }
.t-bookmark { margin: 0 10px 0 26px; }
.t-view { margin: 0 10.500px 0 21px; }
.tool-divider { width: 1px; height: 35px; margin: 0 20px 0 20.500px; background: #605e5c; }
.t-comment, .t-star { margin-left: 20px; }

.report { flex: 1; display: flex; min-height: 0; }
.column { width: 614px; flex: none; }
.column + .column { width: 776px; }
h2 { margin: 0; height: 23px; padding-left: 15.500px; display: flex; align-items: center; font: 400 16.700px Roboto, sans-serif; color: #252423; }
.chart + .chart h2, .chart + .chart .legend { padding-left: 17px; }
.column + .column h2, .column + .column .legend { padding-left: 16.500px; }
.legend { height: 43px; padding-left: 15.700px; display: flex; align-items: center; gap: 6.500px; font-size: 13.300px; color: #605e5c; }
.legend b { margin-right: 2.300px; font-weight: 700; }
.chart + .chart .legend b { margin-right: 1.600px; }
.column + .column .legend b { margin-right: 1.300px; }
.legend-item { display: flex; align-items: center; gap: 3px; }
.legend-item i { width: 11px; height: 11px; border-radius: 50%; }
.grid { stroke: #c0bebc; stroke-width: 1; stroke-dasharray: 1 5.530; }
.axis { font-size: 12.300px; fill: #605e5c; }
.axis-title { font: 400 14.300px Roboto, sans-serif; fill: #252423; stroke: #252423; stroke-width: .15px; }

.filters { flex: 1; border-left: 1px solid #a19f9d; color: #252423; }
.filters-head { height: 57px; padding: 0 12px 8px 15px; display: flex; align-items: center; gap: 9.500px; font-size: 18.500px; }
.filters-head b { font-weight: 600; }
.collapse { margin-left: auto; }
.filters-search { width: 227px; height: 39px; margin-left: 11px; border: 1px solid #a19f9d; border-radius: 2px; display: flex; align-items: center; padding-left: 12px; gap: 17px; font-size: 15.500px; }
.filters-search span { margin-bottom: 1px; }
.filters p { margin: 5px 0 0 1px; border-top: 1px solid #a19f9d; padding: 16px 0 0 9.500px; font-size: 15px; line-height: 22px; }

.statusbar { height: 29px; flex: none; background: #f3f2f1; border-top: 1px solid #dddbd9; display: flex; align-items: center; justify-content: flex-end; padding-right: 28px; padding-bottom: 1px; color: #605e5c; font-size: 14.500px; }
.zoomer { margin-right: 24px; }
.statusbar span { margin-right: 21px; }

.taskbar { height: 50px; flex: none; display: flex; background: linear-gradient(90deg, #e6e9eb 490px, #ececec 760px, #eeeeed 1500px, #e9ebec 1690px, #dde5e9 1745px, #dcd8d6 1790px, #d8d8cd 1835px, #d5e0c8 1890px, #d8e3cb 1920px); color: #111; }
.start { width: 60px; background: #deddd8; display: flex; align-items: center; justify-content: center; }
.task-search { width: 430px; background: #fff; border: 1px solid #c3c3c3; display: flex; align-items: center; padding-left: 14px; gap: 15px; font-size: 17px; color: #2b2b2b; padding-bottom: 1px; }
.task-search svg { color: #111; }
.slot { display: flex; align-items: center; justify-content: center; position: relative; }
.cortana { width: 60px; }
.view { width: 60px; margin-right: 9px; }
.app::after { content: ""; position: absolute; left: 0; right: 0; bottom: 0; height: 3px; background: #0078d7; }
.explorer { width: 51px; margin-right: 6px; padding-right: 1px; }
.chrome { width: 61px; background: linear-gradient(90deg, #f9f9f9 56px, #d4d4d4 56px, #d4d4d4 57px, #f2f2f2 57px); padding-right: 1px; }
.chrome::after { background: linear-gradient(90deg, #0078d7 57px, #68a9e3 57px); }
.mail-slot { width: 62px; }
.teams-slot { width: 51px; margin: 0 11px 0 6px; }
.excel { width: 51px; margin-right: 11px; padding-right: 2px; }
.ppt { width: 51px; padding-right: 2px; }
.ppt::after { background: linear-gradient(90deg, #0078d7 41px, #68a9e3 41px); }
.tray { margin-left: auto; display: flex; align-items: center; font-size: 16.500px; }
.sun { margin: 0 9.500px 4px 0; }
.haze { margin-left: 11.500px; }
.chev-up { margin-left: 30.500px; }
.cam { margin-left: 15px; }
.cloud { margin: 2px 0 0 11px; }
.battery { margin-left: 11px; }
.wifi { margin-left: 12px; }
.volume { margin-left: 11px; }
.lang { margin-left: 13px; font-size: 14px; }
.clock { width: 78px; margin-left: 15.500px; display: flex; flex-direction: column; align-items: center; font-size: 14px; line-height: 22.500px; }
.notice { margin: 10px 15px 0 21.500px; }
.peek { width: 1px; height: 50px; margin-right: 5px; background: #a9b09f; }
</style>
